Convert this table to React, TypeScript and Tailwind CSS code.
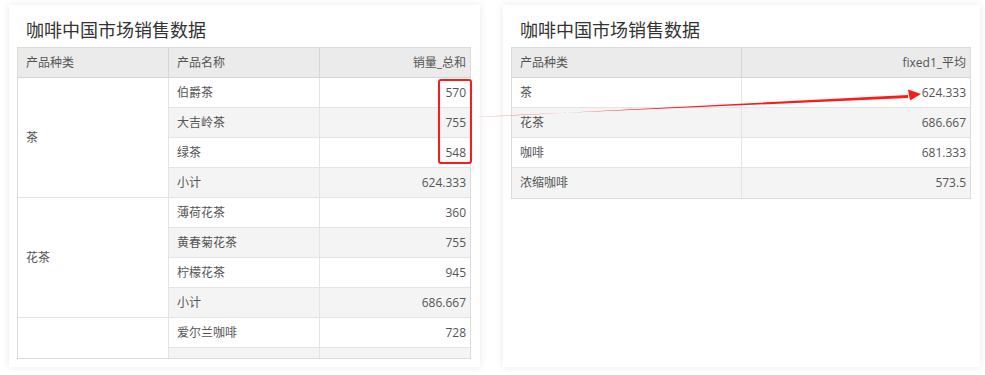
import React from "react";

const FONT = '"Open Sans", "Noto Sans CJK SC", sans-serif';

type Row = { name: string; value: string };
type Group = { cat: string; span: string; rows: Row[] };

const groups: Group[] = [
  {
    cat: "茶",
    span: "row-span-4",
    rows: [
      { name: "伯爵茶", value: "570" },
      { name: "大吉岭茶", value: "755" },
      { name: "绿茶", value: "548" },
      { name: "小计", value: "624.333" },
    ],
  },
  {
    cat: "花茶",
    span: "row-span-4",
    rows: [
      { name: "薄荷花茶", value: "360" },
      { name: "黄春菊花茶", value: "755" },
      { name: "柠檬花茶", value: "945" },
      { name: "小计", value: "686.667" },
    ],
  },
  {
    cat: "",
    span: "row-span-2",
    rows: [
      { name: "爱尔兰咖啡", value: "728" },
      { name: "", value: "" },
    ],
  },
];

const rightRows = [
  { cat: "茶", value: "624.333" },
  { cat: "花茶", value: "686.667" },
  { cat: "咖啡", value: "681.333" },
  { cat: "浓缩咖啡", value: "573.5" },
];

function Card({ children, width }: { children: React.ReactNode; width: string }) {
  return (
    <div
      className={`${width} h-[362px] bg-white shadow-[0_0_8px_rgba(0,0,0,0.09)] pt-[13px] pl-[8px] flex flex-col`}
    >
      {children}
    </div>
  );
}

function Title() {
  return (
    <div className="pl-[9px] h-[24px] leading-[24px] text-[18px] text-[#333] mb-[5px]">
      咖啡中国市场销售数据
    </div>
  );
}

export default function App() {
  let stripe = 0;
  return (
    <div
      className="relative w-[985px] h-[375px] bg-white text-[12px] text-[#555] overflow-hidden"
      style={{ fontFamily: FONT }}
    >
      <div className="flex pt-[5px] pl-[9px] gap-[23px]">
        {/* Left card */}
        <Card width="w-[471px]">
          <Title />
          <div className="w-[454px] h-[312px] border border-[#dcdcdc] overflow-hidden">
            <div className="grid grid-cols-[151px_151px_1fr] auto-rows-[30px]">
              <div className="bg-[#ebebeb] border-r border-b border-[#d6d6d6] flex items-center pl-2">
                产品种类
              </div>
              <div className="bg-[#ebebeb] border-r border-b border-[#d6d6d6] flex items-center pl-2">
                产品名称
              </div>
              <div className="bg-[#ebebeb] border-b border-[#d6d6d6] flex items-center justify-end pr-[4px]">
                销量_总和
              </div>
              {groups.map((g, gi) => (
                <React.Fragment key={gi}>
                  <div
                    className={`${g.span} bg-white border-r border-b border-[#e4e4e4] flex items-center pl-2`}
                  >
                    {g.cat}
                  </div>
                  {g.rows.map((r, i) => {
                    const bg = stripe++ % 2 === 1 ? "bg-[#f4f4f4]" : "bg-white";
                    return (
                      <React.Fragment key={gi + "-" + i}>
                        <div
                          className={`${bg} border-r border-b border-[#e4e4e4] flex items-center pl-2`}
                          style={{ gridColumn: 2 }}
                        >
                          {r.name}
                        </div>
                        <div
                          className={`${bg} border-b border-[#e4e4e4] flex items-center justify-end pr-[4px]`}
                        >
                          {r.value}
                        </div>
                      </React.Fragment>
                    );
                  })}
                </React.Fragment>
              ))}
            </div>
          </div>
        </Card>

        {/* Right card */}
        <Card width="w-[477px]">
          <Title />
          <div className="w-[460px] border border-[#dcdcdc]">
            <div className="grid grid-cols-[230px_1fr] auto-rows-[30px]">
              <div className="bg-[#ebebeb] border-r border-b border-[#d6d6d6] flex items-center pl-2">
                产品种类
              </div>
              <div className="bg-[#ebebeb] border-b border-[#d6d6d6] flex items-center justify-end pr-[4px]">
                fixed1_平均
              </div>
              {rightRows.map((r, i) => {
                const bg = i % 2 === 1 ? "bg-[#f4f4f4]" : "bg-white";
                const last = i === rightRows.length - 1;
                return (
                  <React.Fragment key={r.cat}>
                    <div
                      className={`${bg} border-r ${last ? "" : "border-b"} border-[#e4e4e4] flex items-center pl-2`}
                    >
                      {r.cat}
                    </div>
                    <div
                      className={`${bg} ${last ? "" : "border-b"} border-[#e4e4e4] flex items-center justify-end pr-[4px]`}
                    >
                      {r.value}
                    </div>
                  </React.Fragment>
                );
              })}
            </div>
          </div>
        </Card>
      </div>

      {/* Red highlight box */}
      <div className="absolute left-[438px] top-[79px] w-[34px] h-[85px] border-2 border-[#ff1a1a] rounded-[3px] pointer-events-none" />

      {/* Arrow */}
      <svg
        className="absolute left-0 top-0 pointer-events-none"
        width="985"
        height="375"
        viewBox="0 0 985 375"
      >
        <defs>
          <linearGradient id="fade" x1="478" y1="0" x2="908" y2="0" gradientUnits="userSpaceOnUse">
            <stop offset="0" stopColor="#ff2020" stopOpacity="0.15" />
            <stop offset="0.12" stopColor="#ff2020" stopOpacity="0.8" />
            <stop offset="0.3" stopColor="#ff1a1a" stopOpacity="1" />
            <stop offset="1" stopColor="#ff1a1a" stopOpacity="1" />
          </linearGradient>
        </defs>
        <polygon
          points="478,117.35 478,116.65 908.1,98.1 907.9,95"
          fill="url(#fade)"
        />
        <polygon points="921,94 908,89.5 910,100.5" fill="#ff1a1a" />
      </svg>
    </div>
  );
}
